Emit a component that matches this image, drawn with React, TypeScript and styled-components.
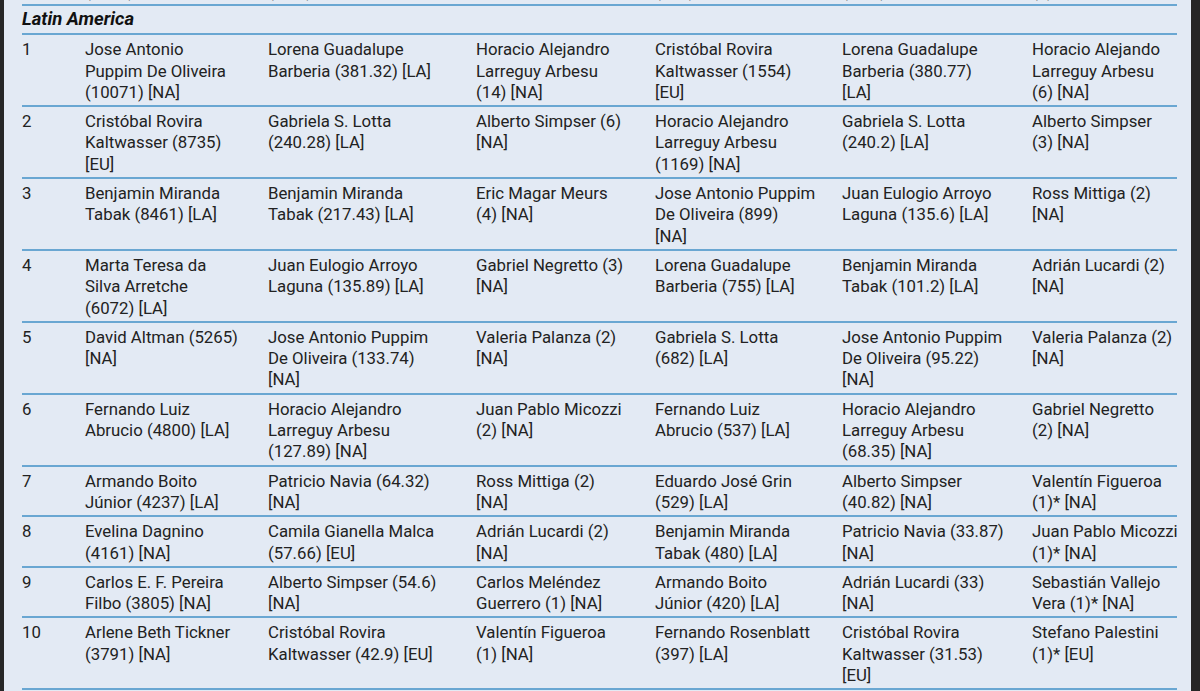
import React from "react";
import styled, { createGlobalStyle } from "styled-components";

const Global = createGlobalStyle`
  html, body { margin: 0; padding: 0; background: #262626; }
  body { font-family: Roboto, "Liberation Sans", Arial, sans-serif; }
`;

const Panel = styled.div`
  margin-left: 4px;
  width: 1187px;
  height: 691px;
  background: #e3eaf4;
  overflow: hidden;
`;

const Table = styled.div`
  margin-left: 18px;
  width: 1155px;
  display: flex;
  flex-direction: column;
  color: #222222;
`;

const Row = styled.div<{ $clip?: boolean }>`
  display: grid;
  grid-template-columns: 63px 183px 208px 179px 187px 190px 145px;
  padding: 4px 0 2px;
  border-bottom: 2px solid #6aa7d2;
  margin-top: ${(p) => (p.$clip ? "-23px" : "0")};
  font-size: 16.8px;
  line-height: 21.3px;
`;

const Cell = styled.div`
  display: flex;
  flex-direction: column;
`;

const Line = styled.span`
  white-space: nowrap;
`;

const SectionRow = styled.div`
  height: 27px;
  line-height: 27px;
  border-bottom: 2px solid #6aa7d2;
  font-size: 18.5px;
  font-weight: 700;
  font-style: italic;
  color: #111;
`;

type Data = [string, string[][]];

const rows: Data[] = [
  ["1", [["Jose Antonio", "Puppim De Oliveira", "(10071) [NA]"], ["Lorena Guadalupe", "Barberia (381.32) [LA]"], ["Horacio Alejandro", "Larreguy Arbesu", "(14) [NA]"], ["Cristóbal Rovira", "Kaltwasser (1554)", "[EU]"], ["Lorena Guadalupe", "Barberia (380.77)", "[LA]"], ["Horacio Alejando", "Larreguy Arbesu", "(6) [NA]"]]],
  ["2", [["Cristóbal Rovira", "Kaltwasser (8735)", "[EU]"], ["Gabriela S. Lotta", "(240.28) [LA]"], ["Alberto Simpser (6)", "[NA]"], ["Horacio Alejandro", "Larreguy Arbesu", "(1169) [NA]"], ["Gabriela S. Lotta", "(240.2) [LA]"], ["Alberto Simpser", "(3) [NA]"]]],
  ["3", [["Benjamin Miranda", "Tabak (8461) [LA]"], ["Benjamin Miranda", "Tabak (217.43) [LA]"], ["Eric Magar Meurs", "(4) [NA]"], ["Jose Antonio Puppim", "De Oliveira (899)", "[NA]"], ["Juan Eulogio Arroyo", "Laguna (135.6) [LA]"], ["Ross Mittiga (2)", "[NA]"]]],
  ["4", [["Marta Teresa da", "Silva Arretche", "(6072) [LA]"], ["Juan Eulogio Arroyo", "Laguna (135.89) [LA]"], ["Gabriel Negretto (3)", "[NA]"], ["Lorena Guadalupe", "Barberia (755) [LA]"], ["Benjamin Miranda", "Tabak (101.2) [LA]"], ["Adrián Lucardi (2)", "[NA]"]]],
  ["5", [["David Altman (5265)", "[NA]"], ["Jose Antonio Puppim", "De Oliveira (133.74)", "[NA]"], ["Valeria Palanza (2)", "[NA]"], ["Gabriela S. Lotta", "(682) [LA]"], ["Jose Antonio Puppim", "De Oliveira (95.22)", "[NA]"], ["Valeria Palanza (2)", "[NA]"]]],
  ["6", [["Fernando Luiz", "Abrucio (4800) [LA]"], ["Horacio Alejandro", "Larreguy Arbesu", "(127.89) [NA]"], ["Juan Pablo Micozzi", "(2) [NA]"], ["Fernando Luiz", "Abrucio (537) [LA]"], ["Horacio Alejandro", "Larreguy Arbesu", "(68.35) [NA]"], ["Gabriel Negretto", "(2) [NA]"]]],
  ["7", [["Armando Boito", "Júnior (4237) [LA]"], ["Patricio Navia (64.32)", "[NA]"], ["Ross Mittiga (2)", "[NA]"], ["Eduardo José Grin", "(529) [LA]"], ["Alberto Simpser", "(40.82) [NA]"], ["Valentín Figueroa", "(1)* [NA]"]]],
  ["8", [["Evelina Dagnino", "(4161) [NA]"], ["Camila Gianella Malca", "(57.66) [EU]"], ["Adrián Lucardi (2)", "[NA]"], ["Benjamin Miranda", "Tabak (480) [LA]"], ["Patricio Navia (33.87)", "[NA]"], ["Juan Pablo Micozzi", "(1)* [NA]"]]],
  ["9", [["Carlos E. F. Pereira", "Filbo (3805) [NA]"], ["Alberto Simpser (54.6)", "[NA]"], ["Carlos Meléndez", "Guerrero (1) [NA]"], ["Armando Boito", "Júnior (420) [LA]"], ["Adrián Lucardi (33)", "[NA]"], ["Sebastián Vallejo", "Vera (1)* [NA]"]]],
  ["10", [["Arlene Beth Tickner", "(3791) [NA]"], ["Cristóbal Rovira", "Kaltwasser (42.9) [EU]"], ["Valentín Figueroa", "(1) [NA]"], ["Fernando Rosenblatt", "(397) [LA]"], ["Cristóbal Rovira", "Kaltwasser (31.53)", "[EU]"], ["Stefano Palestini", "(1)* [EU]"]]],
];

const prev: string[][] = [["(3812) [NA]"], ["(39.1) [LA]"], [""], ["(388) [LA]"], ["(30.4) [EU]"], ["(1)* [NA]"]];

function TableRow({ num, cells, clip }: { num: string; cells: string[][]; clip?: boolean }) {
  return (
    <Row $clip={clip}>
      <Cell>
        <Line>{num}</Line>
      </Cell>
      {cells.map((c, i) => (
        <Cell key={i}>
          {c.map((l, j) => (
            <Line key={j}>{l}</Line>
          ))}
        </Cell>
      ))}
    </Row>
  );
}

export default function App() {
  return (
    <>
      <Global />
      <Panel>
        <Table>
          <TableRow num="" cells={prev} clip />
          <SectionRow>Latin America</SectionRow>
          {rows.map(([n, c]) => (
            <TableRow key={n} num={n} cells={c} />
          ))}
        </Table>
      </Panel>
    </>
  );
}
